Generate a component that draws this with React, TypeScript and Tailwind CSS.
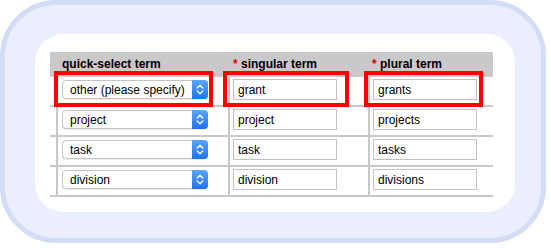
import React from "react";

const rows = [
  { sel: "other (please specify)", s: "grant", p: "grants" },
  { sel: "project", s: "project", p: "projects" },
  { sel: "task", s: "task", p: "tasks" },
  { sel: "division", s: "division", p: "divisions" },
];

function Select({ label }: { label: string }) {
  return (
    <div className="relative flex h-[19px] w-[146px] items-center rounded-[4px] border border-[#c4c4c4] bg-white shadow-[0_1px_0_rgba(0,0,0,0.08)]">
      <span className="pl-[7px] text-[12px] leading-none text-black">{label}</span>
      <div className="absolute right-[-1px] top-[-1px] bottom-[-1px] w-[16px] rounded-r-[4px] bg-gradient-to-b from-[#5aa6fb] to-[#1d72f1]">
        <svg width="16" height="19" viewBox="0 0 16 19" className="block h-full w-full">
          <path d="M5.2 8 L8 5.3 L10.8 8" fill="none" stroke="white" strokeWidth="1.3" strokeLinecap="round" strokeLinejoin="round" />
          <path d="M5.2 11 L8 13.7 L10.8 11" fill="none" stroke="white" strokeWidth="1.3" strokeLinecap="round" strokeLinejoin="round" />
        </svg>
      </div>
    </div>
  );
}

function TextBox({ value }: { value: string }) {
  return (
    <div className="flex h-[21px] w-[104px] items-center border border-[#c2c2c2] bg-white pl-[4px] text-[12px] leading-none text-black">
      {value}
    </div>
  );
}

export default function App() {
  return (
    <div
      className="h-[248px] w-[551px] overflow-hidden bg-white"
      style={{ fontFamily: '"Liberation Sans", Arial, Helvetica, sans-serif' }}
    >
      <div className="h-[243px] w-[546px] rounded-[56px] border-[5px] border-[#d3def6] bg-[#eaeefd] pl-[30px] pt-[29px]">
        <div className="h-[178px] w-[480px] rounded-[28px] bg-white pl-[15px] pt-[18px]">
          <div className="relative w-[443px]">
            {/* header */}
            <div className="flex h-[25px] items-center bg-[#c9c9c9] pb-[2px] text-[12px] font-bold text-black">
              <div className="w-[6px]" />
              <div className="w-[172px] pl-[6px]">quick-select term</div>
              <div className="w-[140px] pl-[5px]">
                <span className="font-bold text-[#e00000]">*</span> singular term
              </div>
              <div className="w-[125px] pl-[4px]">
                <span className="font-bold text-[#e00000]">*</span> plural term
              </div>
            </div>
            {/* body */}
            {rows.map((r) => (
              <div key={r.s} className="flex h-[30px] border-b-2 border-[#c8c8c8]">
                <div className="w-[6px]" />
                <div className="w-[172px] border-l-2 border-[#c8c8c8] pl-[4px] pt-[3px]">
                  <Select label={r.sel} />
                </div>
                <div className="w-[140px] border-l-2 border-[#c8c8c8] pl-[3px] pt-[2px]">
                  <TextBox value={r.s} />
                </div>
                <div className="w-[125px] border-l-2 border-[#c8c8c8] pl-[3px] pt-[2px]">
                  <TextBox value={r.p} />
                </div>
              </div>
            ))}
            {/* annotation boxes */}
            <div className="pointer-events-none absolute left-[4px] top-[19px] h-[36px] w-[159px] border-4 border-[#ff0000]" />
            <div className="pointer-events-none absolute left-[173px] top-[19px] h-[36px] w-[126px] border-4 border-[#ff0000]" />
            <div className="pointer-events-none absolute left-[314px] top-[19px] h-[36px] w-[119px] border-4 border-[#ff0000]" />
          </div>
        </div>
      </div>
    </div>
  );
}
